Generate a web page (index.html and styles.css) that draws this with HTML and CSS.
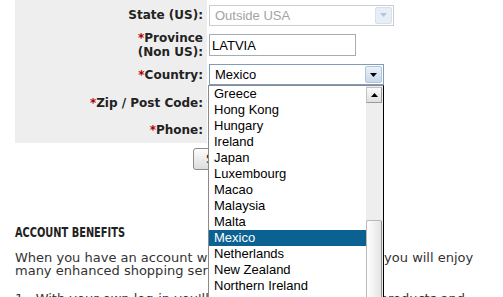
FILE: index.html
```html
<!DOCTYPE html>
<html lang="en">
<head>
    <meta charset="UTF-8">
    <meta name="viewport" content="width=device-width, initial-scale=1.0">
    <title>My Account - Address</title>
    <link rel="stylesheet" href="styles.css">
</head>
<body>

<div class="page">
    <div class="account-form">
        <div class="form-row row-state">
            <div class="form-label">State (US):</div>
            <div class="form-field">
                <div class="select select-state is-disabled">
                    <span class="select-value">Outside USA</span>
                    <span class="select-arrow"><svg width="7" height="4" viewBox="0 0 7 4"><path d="M0 0h7L3.5 4z" fill="#b9c4d2"/></svg></span>
                </div>
            </div>
        </div>

        <div class="form-row row-province">
            <div class="form-label"><span><span class="req">*</span>Province<br>(Non US):</span></div>
            <div class="form-field">
                <input type="text" class="text-input" id="province" value="LATVIA">
            </div>
        </div>

        <div class="form-row row-country">
            <div class="form-label"><span><span class="req">*</span>Country:</span></div>
            <div class="form-field">
                <div class="select select-country">
                    <span class="select-value">Mexico</span>
                    <span class="select-arrow"><svg width="7" height="4" viewBox="0 0 7 4"><path d="M0 0h7L3.5 4z" fill="#000"/></svg></span>
                </div>
            </div>
        </div>

        <div class="form-row row-zip">
            <div class="form-label"><span><span class="req">*</span>Zip / Post Code:</span></div>
            <div class="form-field">
                <input type="text" class="text-input input-zip" id="zip">
            </div>
        </div>

        <div class="form-row row-phone">
            <div class="form-label"><span><span class="req">*</span>Phone:</span></div>
            <div class="form-field">
                <input type="text" class="text-input" id="phone">
            </div>
        </div>
    </div>

    <div class="form-actions">
        <button class="btn">Save</button>
    </div>

    <h3 class="benefits-title">ACCOUNT BENEFITS</h3>
    <p class="benefits-text">When you have an account with us and you're signed in you will enjoy<br>many enhanced shopping services such as:</p>
    <p class="benefits-text">1.&nbsp; With your own log-in you'll be able to save and view products and</p>

    <!-- open country list -->
    <div class="dropdown-list">
        <div class="dropdown-items">
            <div class="dropdown-item">Greece</div>
            <div class="dropdown-item">Hong Kong</div>
            <div class="dropdown-item">Hungary</div>
            <div class="dropdown-item">Ireland</div>
            <div class="dropdown-item">Japan</div>
            <div class="dropdown-item">Luxembourg</div>
            <div class="dropdown-item">Macao</div>
            <div class="dropdown-item">Malaysia</div>
            <div class="dropdown-item">Malta</div>
            <div class="dropdown-item is-selected">Mexico</div>
            <div class="dropdown-item">Netherlands</div>
            <div class="dropdown-item">New Zealand</div>
            <div class="dropdown-item">Northern Ireland</div>
            <div class="dropdown-item">Norway</div>
        </div>
        <div class="scrollbar">
            <div class="scroll-btn"><svg width="7" height="4" viewBox="0 0 7 4"><path d="M0 4h7L3.5 0z" fill="#000"/></svg></div>
            <div class="scroll-thumb"></div>
        </div>
    </div>
</div>

</body>
</html>
```

FILE: styles.css
```css
body {
    margin: 0;
    padding: 0;
    background-color: #fff;
    color: #333;
    font-family: "DejaVu Sans", Verdana, sans-serif;
}

.page {
    position: relative;
    padding: 0 15px;
}

.form-row {
    display: flex;
}

.row-state, .row-province {
    height: 30px;
}

.row-country {
    height: 29px;
}

.row-zip, .row-phone {
    height: 27px;
}

.form-label {
    width: 192px;
    box-sizing: border-box;
    padding-right: 4px;
    background-color: #eee;
    display: flex;
    align-items: center;
    justify-content: flex-end;
    text-align: right;
    font-size: 12px;
    font-weight: bold;
    line-height: 14px;
    color: #222;
}

.req {
    color: #b00000;
}

.form-field {
    padding-left: 2px;
    display: flex;
    align-items: center;
}

.select {
    box-sizing: border-box;
    height: 21px;
    display: flex;
    align-items: center;
    padding-left: 5px;
    border: 1px solid #7f9db9;
    background-color: #fff;
    font-family: "Liberation Sans", Arial, sans-serif;
    font-size: 13px;
    color: #000;
}

.select-value {
    flex: 1;
}

.select-arrow {
    box-sizing: border-box;
    width: 17px;
    height: 17px;
    margin-right: 1px;
    display: flex;
    align-items: center;
    justify-content: center;
    border: 1px solid #b3c3dc;
    border-radius: 2px;
    background: linear-gradient(#eaf0f9, #c9d7ec);
}

.select-state {
    width: 185px;
    border-color: #cdcdcd;
    color: #a3a3a3;
}

.select-state .select-arrow {
    border-color: #d6e0ee;
    background: #e6eef8;
}

.select-country {
    width: 175px;
}

.text-input {
    box-sizing: border-box;
    width: 147px;
    height: 22px;
    padding: 0 2px;
    border: 1px solid #a5acb2;
    font-family: "Liberation Sans", Arial, sans-serif;
    font-size: 13px;
    color: #000;
}

.input-zip {
    width: 100px;
}

.form-actions {
    margin-top: 5px;
    padding-left: 178px;
}

.btn {
    height: 22px;
    padding: 0 12px;
    border: 1px solid #8b8b8b;
    border-radius: 3px;
    background: linear-gradient(#fdfdfd, #dcdcdc);
    font-family: "DejaVu Sans", Verdana, sans-serif;
    font-size: 12px;
    color: #222;
}

/* no narrow face installed, so squeeze the condensed bold */
.benefits-title {
    margin: 54px 0 11px;
    font-family: "DejaVu Sans Condensed", "DejaVu Sans", sans-serif;
    font-stretch: condensed;
    font-size: 14px;
    line-height: 16px;
    font-weight: bold;
    color: #222;
    transform: scaleX(0.78);
    transform-origin: left center;
}

.benefits-text {
    margin: 0 0 15px;
    font-size: 13px;
    line-height: 13px;
    color: #333;
}

.dropdown-list {
    position: absolute;
    left: 208px;
    top: 85px;
    width: 176px;
    height: 230px;
    box-sizing: border-box;
    display: flex;
    border: 1px solid #000;
    border-left-color: #8a8a8a;
    border-top-color: #8a8a8a;
    background-color: #fff;
}

.dropdown-items {
    flex: 1;
}

.dropdown-item {
    height: 16px;
    line-height: 16px;
    padding-left: 5px;
    font-family: "Liberation Sans", Arial, sans-serif;
    font-size: 13px;
    color: #000;
}

.dropdown-item.is-selected {
    background-color: #0b6191;
    color: #fff;
}

.scrollbar {
    width: 17px;
    padding-top: 1px;
    background-color: #eeeeee;
}

.scroll-btn {
    box-sizing: border-box;
    width: 16px;
    height: 16px;
    display: flex;
    align-items: center;
    justify-content: center;
    border: 1px solid #c2c2c2;
    border-right-color: #9a9a9a;
    border-bottom-color: #9a9a9a;
    background: linear-gradient(#fafafa, #e0e0e0);
}

.scroll-thumb {
    box-sizing: border-box;
    width: 16px;
    height: 110px;
    margin-top: 117px;
    border: 1px solid #b8b8b8;
    border-right-color: #8f8f8f;
    border-radius: 2px;
    background: linear-gradient(to right, #ffffff, #e4e4e4);
}
```
